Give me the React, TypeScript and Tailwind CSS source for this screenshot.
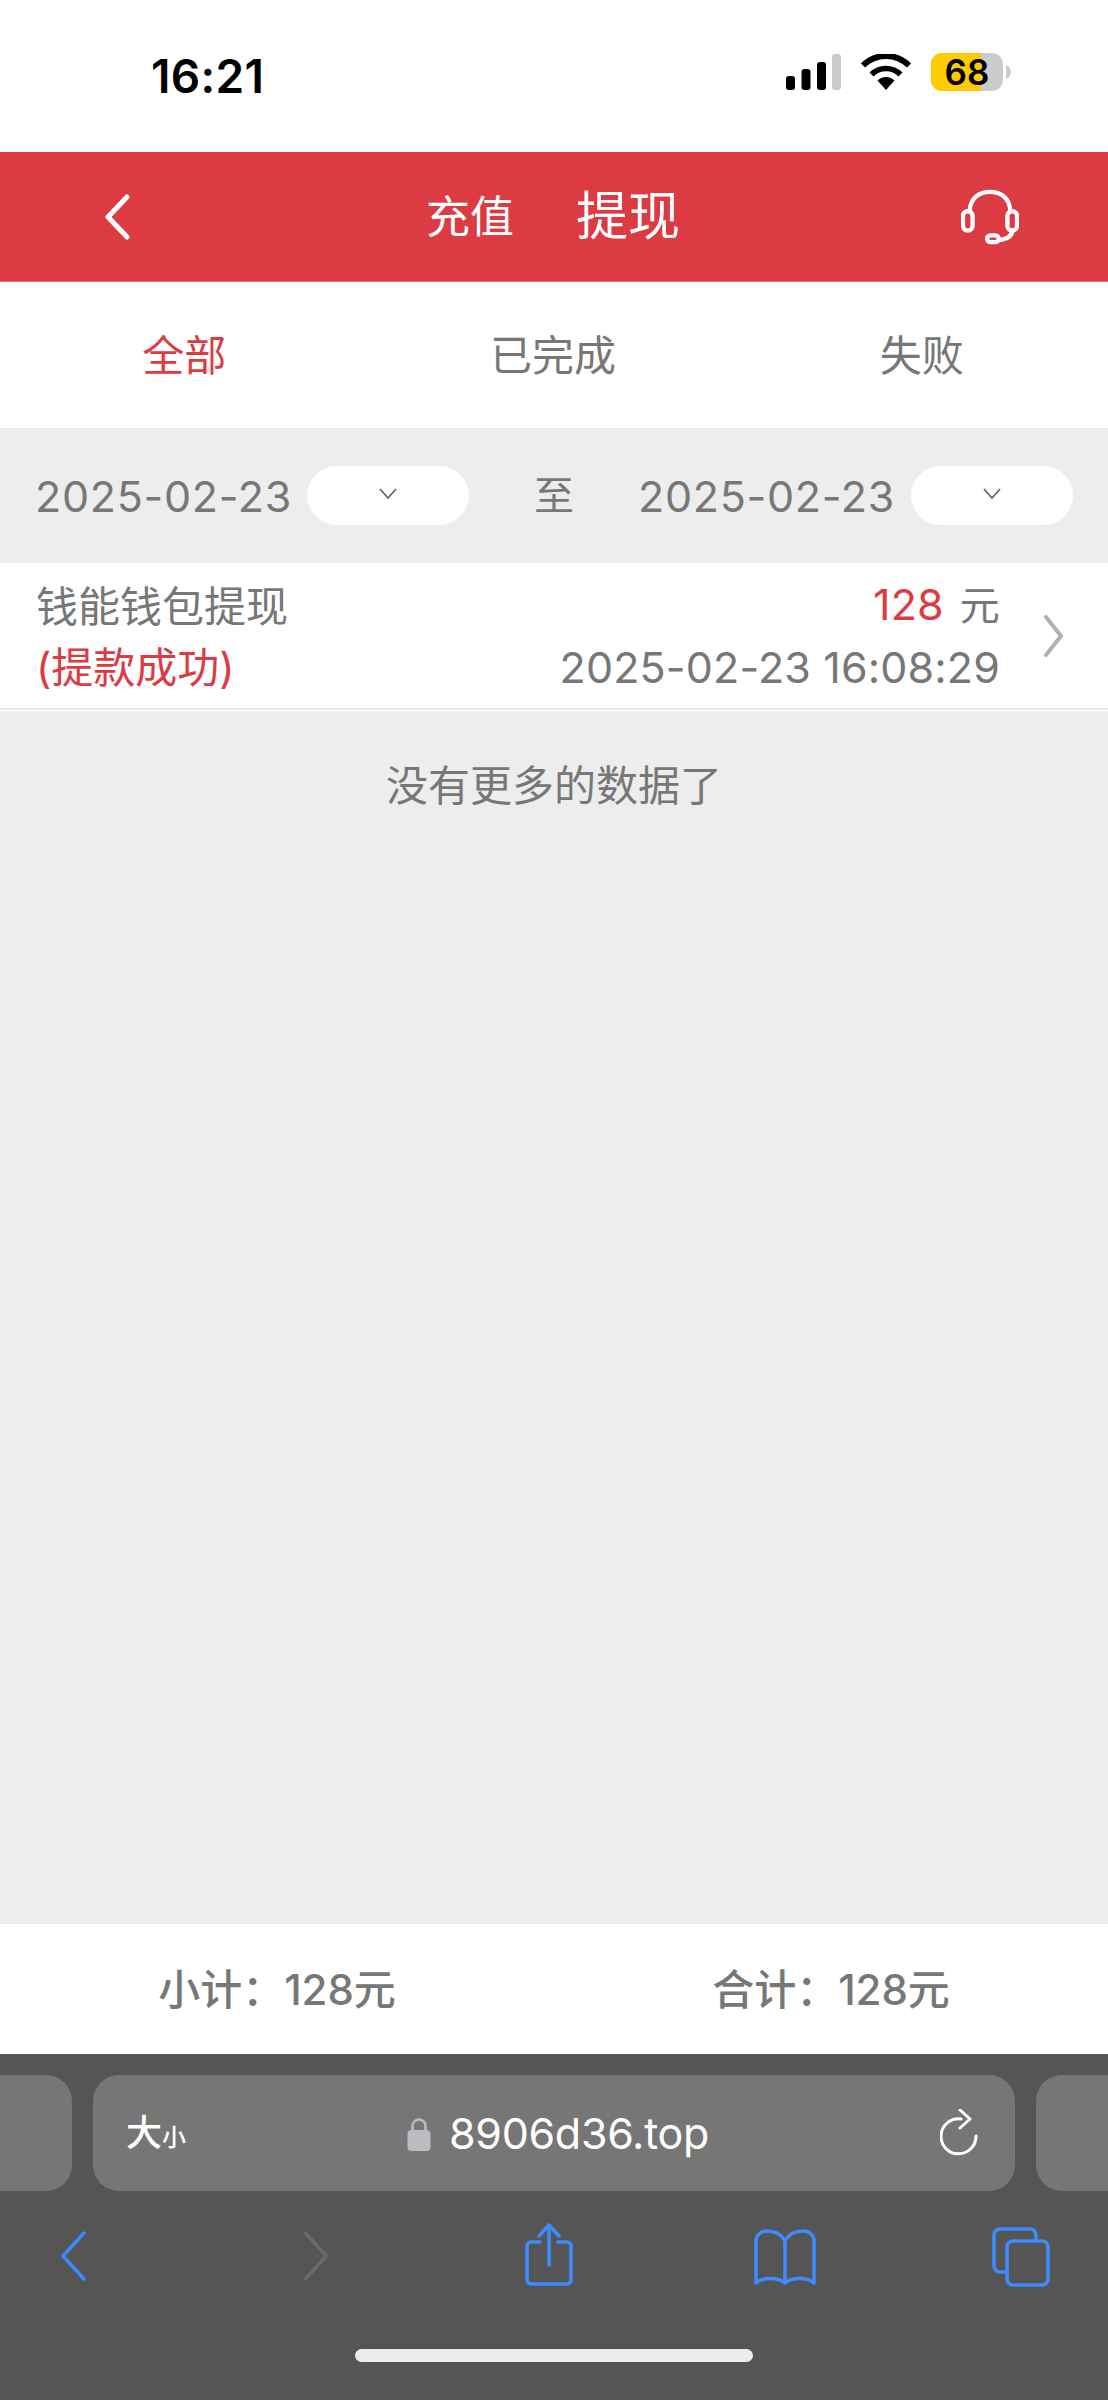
import React from "react";

const font = { fontFamily: '"Inter","Noto Sans CJK SC",sans-serif' };

function Chevron() {
  return (
    <svg width="20" height="12" viewBox="0 0 20 12" fill="none" stroke="#666" strokeWidth="1.8" className="mb-[3px]">
      <path d="M2 1l8 9 8-9" />
    </svg>
  );
}

function Pill() {
  return (
    <div className="w-[162px] h-[59px] rounded-full bg-white flex items-center justify-center shrink-0">
      <Chevron />
    </div>
  );
}

export default function App() {
  return (
    <div className="w-[1108px] h-[2400px] flex flex-col bg-[#ededed] overflow-hidden" style={font}>
      <div className="h-[152px] bg-white flex justify-between pl-[151px] pr-[97px] pt-[48px]">
        <span className="text-[46px] leading-[56px] font-semibold text-black tracking-[0.3px]">16:21</span>
        <div className="flex items-start gap-[20px] pt-[6px]">
          <svg width="55" height="36" viewBox="0 0 55 36">
            <rect x="0" y="22" width="9" height="14" rx="3" fill="#000" />
            <rect x="15.5" y="15" width="9" height="21" rx="3" fill="#000" />
            <rect x="31" y="8" width="9" height="28" rx="3" fill="#000" />
            <rect x="46" y="0" width="9" height="36" rx="3" fill="#ccc" />
          </svg>
          <svg width="50" height="36" viewBox="0 0 50 36">
            <path d="M25 36l-8.5-9.5a12 12 0 0 1 17 0z" fill="#000" />
            <path d="M10.5 20.5a20.5 20.5 0 0 1 29 0" fill="none" stroke="#000" strokeWidth="5.6" />
            <path d="M2 11.5a32.5 32.5 0 0 1 46 0" fill="none" stroke="#000" strokeWidth="6" />
          </svg>
          <div className="flex items-center -mt-[1px]">
            <div className="relative w-[72px] h-[38px] rounded-[11px] bg-[#ccc] flex items-center justify-center">
              <div className="absolute left-0 top-0 bottom-0 w-[50px] rounded-l-[11px] bg-[#fecb00]" />
              <span className="relative text-[35px] leading-none font-semibold text-black">68</span>
            </div>
            <svg width="5" height="14" viewBox="0 0 5 14" className="ml-[3px]">
              <path d="M0 0c3 1 5 4 5 7s-2 6-5 7z" fill="#ccc" />
            </svg>
          </div>
        </div>
      </div>

      <div className="h-[130px] bg-[#dc3b43] border-b border-[#e9727a] flex items-center pl-[105px] pr-[89px]">
        <svg width="25" height="46" viewBox="0 0 25 46" fill="none" stroke="#fff" strokeWidth="5" strokeLinecap="round" strokeLinejoin="round">
          <path d="M22 3L3 23l19 20" />
        </svg>
        <div className="flex items-center text-white ml-[296px]">
          <span className="text-[44px] leading-none">充值</span>
          <span className="text-[52px] leading-none ml-[62px]">提现</span>
        </div>
        <svg width="58" height="56" viewBox="0 0 60 56" fill="none" stroke="#fff" strokeWidth="4.5" strokeLinecap="round" className="ml-auto">
          <path d="M9 21C10 8 19 2 30 2s20 6 21 19" />
          <rect x="2" y="22" width="10" height="20" rx="5" />
          <rect x="48" y="22" width="10" height="20" rx="5" />
          <path d="M53 42c0 6-6 9-14 10" />
          <rect x="27" y="47" width="12" height="7" rx="3.5" />
        </svg>
      </div>

      <div className="h-[146px] bg-white grid grid-cols-3 items-center text-center text-[42px] leading-none text-[#777] pt-[2px] pr-[2px]">
        <span className="text-[#dc3b43]">全部</span>
        <span>已完成</span>
        <span>失败</span>
      </div>

      <div className="h-[135px] flex items-center pl-[35px] whitespace-nowrap text-[#777]">
        <span className="text-[43px] leading-none tracking-[0.7px] w-[272px] pt-[2px]">2025-02-23</span>
        <Pill />
        <span className="text-[40px] leading-none ml-[65px] w-[104px]">至</span>
        <span className="text-[43px] leading-none tracking-[0.7px] w-[273px] pt-[2px]">2025-02-23</span>
        <Pill />
      </div>

      <div className="h-[147px] bg-white flex border-b-[2px] border-[#e7e7e7] pl-[36px] pr-[44px]">
        <div className="flex-1 flex flex-col gap-[11px] pt-[19px] text-[42px] leading-[50px]">
          <span className="text-[#777]">钱能钱包提现</span>
          <span className="text-[#dc3b43]">(提款成功)</span>
        </div>
        <div className="flex flex-col items-end gap-[11px] pt-[16px] mr-[43px] text-[43px] leading-[50px] text-[#777] tracking-[0.15px] whitespace-nowrap">
          <span>
            <span className="text-[#dc3b43]">128</span>
            <span className="ml-[16px] text-[40px]">元</span>
          </span>
          <span>2025-02-23 16:08:29</span>
        </div>
        <svg width="21" height="42" viewBox="0 0 21 42" fill="none" stroke="#b0b0b0" strokeWidth="4" strokeLinecap="round" strokeLinejoin="round" className="self-center">
          <path d="M3 2l15 19L3 40" />
        </svg>
      </div>
      <div className="h-px bg-white" />

      <div className="flex-1 flex flex-col items-center pt-[54px] text-[42px] leading-none text-[#777]">
        <span>没有更多的数据了</span>
      </div>

      <div className="h-[130px] bg-white grid grid-cols-2 items-center text-center text-[42px] leading-none font-medium text-[#777] pt-[2px]">
        <span>小计：128元</span>
        <span>合计：128元</span>
      </div>

      <div className="h-[346px] bg-[#555] flex flex-col">
        <div className="flex gap-[21px] mt-[21px] h-[116px] ml-[-40px] w-[1200px]">
          <div className="w-[112px] rounded-[26px] bg-[#767676]" />
          <div className="w-[922px] rounded-[26px] bg-[#767676] flex items-center pl-[33px] pr-[37px] text-white">
            <span className="leading-none w-[61px] whitespace-nowrap">
              <span className="text-[36px] font-medium">大</span>
              <span className="text-[24px] font-medium">小</span>
            </span>
            <svg width="24" height="34" viewBox="0 0 24 34" className="ml-[220px] mt-[2px]">
              <path d="M5.5 14V9a6.5 6.5 0 0 1 13 0v5" fill="none" stroke="#bbbbc2" strokeWidth="2.6" />
              <rect x="0.5" y="13" width="23" height="21" rx="4" fill="#bbbbc2" />
            </svg>
            <span className="text-[43px] leading-none tracking-[-0.3px] ml-[18px]">8906d36.top</span>
            <svg width="38" height="48" viewBox="0 0 38 48" fill="none" stroke="#fff" strokeWidth="3" strokeLinecap="round" strokeLinejoin="round" className="ml-auto">
              <path d="M21 10A17.5 17.5 0 1 0 36 27" />
              <path d="M20 1l10 9-10 9" />
            </svg>
          </div>
          <div className="flex-1 rounded-[26px] bg-[#767676]" />
        </div>
        <div className="flex items-start mt-[32px] pl-[60px] h-[64px]">
          <svg width="26" height="50" viewBox="0 0 26 50" fill="none" stroke="#3d8bfd" strokeWidth="3.4" strokeLinecap="round" strokeLinejoin="round" className="mt-[8px]">
            <path d="M24 2L3 25l21 23" />
          </svg>
          <svg width="27" height="50" viewBox="0 0 26 50" fill="none" stroke="#6b6b6b" strokeWidth="3.4" strokeLinecap="round" strokeLinejoin="round" className="mt-[8px] ml-[217px]">
            <path d="M2 2l21 23L2 48" />
          </svg>
          <svg width="48" height="64" viewBox="0 0 48 64" fill="none" stroke="#3d8bfd" strokeWidth="3.6" strokeLinecap="round" strokeLinejoin="round" className="ml-[195px]">
            <path d="M15 19H6a4 4 0 0 0-4 4v34a4 4 0 0 0 4 4h36a4 4 0 0 0 4-4V23a4 4 0 0 0-4-4h-9" />
            <path d="M24 42V2M14 13L24 2l10 11" />
          </svg>
          <svg width="62" height="56" viewBox="0 0 62 56" fill="none" stroke="#3d8bfd" strokeWidth="3.6" strokeLinecap="round" strokeLinejoin="round" className="mt-[6px] ml-[181px]">
            <path d="M31 12C27 4 20 2 13 2 7 2 2 6 2 12v42c6-6 22-6 29 0 7-6 23-6 29 0V12c0-6-5-10-11-10-7 0-14 2-18 10zM31 12v42" />
          </svg>
          <svg width="58" height="60" viewBox="0 0 58 60" fill="none" stroke="#3d8bfd" strokeWidth="3.6" strokeLinejoin="round" className="mt-[4px] ml-[176px]">
            <path d="M14 45H8a6 6 0 0 1-6-6V8a6 6 0 0 1 6-6h30a6 6 0 0 1 6 6v6" />
            <rect x="15" y="14" width="41" height="44" rx="6" />
          </svg>
        </div>
        <div className="mt-[62px] mx-auto w-[398px] h-[13px] rounded-full bg-[#ececec]" />
      </div>
    </div>
  );
}
